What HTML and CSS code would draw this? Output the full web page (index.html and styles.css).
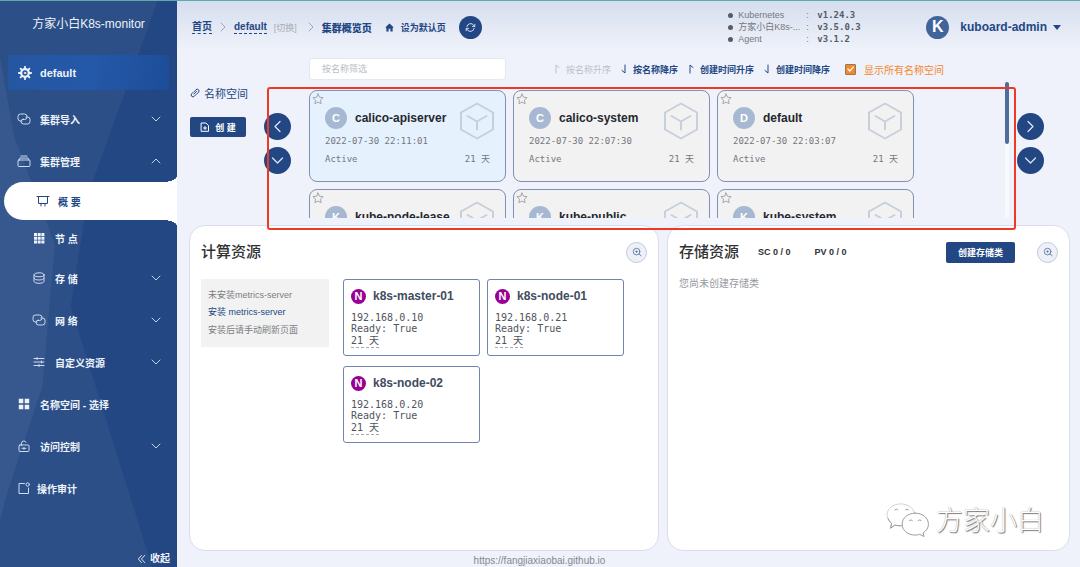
FILE: index.html
```
<!DOCTYPE html>
<html lang="zh-CN">
<head>
<meta charset="utf-8">
<title>方家小白K8s-monitor</title>
<link rel="stylesheet" href="styles.css">
</head>
<body>
<svg class="defs" aria-hidden="true">
  <symbol id="chev" viewBox="0 0 12 12"><path d="M2 4l4 4 4-4"/></symbol>
  <symbol id="star" viewBox="0 0 12 12"><path d="M6 1l1.500 3.200 3.500.5-2.500 2.500.6 3.500L6 9.100 2.900 10.700l.6-3.500L1 4.700l3.500-.5z"/></symbol>
  <symbol id="cube" viewBox="0 0 36 38"><path d="M18 1.500L34 10.500V27.500L18 36.500 2 27.500V10.500zM18 27.500V19.500M8.500 14L18 19.500 27.500 14"/></symbol>
  <symbol id="links" viewBox="0 0 14 12"><path d="M5 8H3.500A2.500 2.500 0 0 1 1 5.500v-2A2.500 2.500 0 0 1 3.500 1h4A2.500 2.500 0 0 1 10 3.500v.8A2.500 2.500 0 0 1 7.500 6.500H6M9 4h1.500A2.500 2.500 0 0 1 13 6.500v2a2.500 2.500 0 0 1-2.500 2.500h-4A2.500 2.500 0 0 1 4 8.500v-.3A2.500 2.500 0 0 1 6.500 6"/></symbol>
  <symbol id="magnify" viewBox="0 0 12 12"><circle cx="5.500" cy="5.500" r="4"/><path d="M8.500 8.500L11 10.500M4.500 5.500h2M5.500 4.500v2"/></symbol>
  <symbol id="up" viewBox="0 0 8 10"><path d="M3 9V1l3 2.500"/></symbol>
  <symbol id="down" viewBox="0 0 8 10"><path d="M5 1v8L2 6.500"/></symbol>
</svg>

<aside class="sidebar">
  <h1 class="brand">方家小白K8s-monitor</h1>
  <a class="cluster" href="#">
    <svg class="ico" viewBox="0 0 14 14"><circle cx="7" cy="7" r="3.800" stroke-width="2.200"/><circle cx="7" cy="7" r=".8"/><path d="M7 .8v2M7 11.200v2M.8 7h2M11.200 7h2M2.600 2.600l1.400 1.400M10 10l1.400 1.400M11.400 2.600L10 4M4 10l-1.400 1.400" stroke-width="1.800"/></svg>
    <span>default</span>
  </a>
  <nav class="menu">
    <a class="item" href="#"><svg class="ico"><use href="#links"/></svg><span>集群导入</span><svg class="chev"><use href="#chev"/></svg></a>
    <a class="item" href="#"><svg class="ico" viewBox="0 0 14 12"><rect x="1" y="5" width="12" height="6.500" rx="1"/><path d="M2 5l1-2h8l1 2M4 1h6"/></svg><span>集群管理</span><svg class="chev flip"><use href="#chev"/></svg></a>
    <a class="item sub active" href="#"><svg class="ico" viewBox="0 0 14 12"><path d="M1 1.500h12M2.500 1.500v7h9v-7M5 8.500v2.500M9 8.500v2.500"/></svg><span>概 要</span></a>
    <a class="item sub first" href="#"><svg class="ico solid" viewBox="0 0 12 12"><path d="M1 1h3v3H1zM4.700 1h3v3h-3zM8.400 1h3v3h-3zM1 4.700h3v3H1zM4.700 4.700h3v3h-3zM8.400 4.700h3v3h-3zM1 8.400h3v3H1zM4.700 8.400h3v3h-3zM8.400 8.400h3v3h-3z"/></svg><span>节 点</span></a>
    <a class="item sub" href="#"><svg class="ico" viewBox="0 0 12 12"><ellipse cx="6" cy="2.800" rx="5" ry="2"/><path d="M1 2.800v6.500c0 1.200 2.200 2 5 2s5-.8 5-2V2.800M1 6c0 1.200 2.200 2 5 2s5-.8 5-2"/></svg><span>存 储</span><svg class="chev"><use href="#chev"/></svg></a>
    <a class="item sub" href="#"><svg class="ico"><use href="#links"/></svg><span>网 络</span><svg class="chev"><use href="#chev"/></svg></a>
    <a class="item sub" href="#"><svg class="ico" viewBox="0 0 12 12"><path d="M1 2.500h10M1 6h10M1 9.500h10M4 1.500v2M8.500 5v2M6 8.500v2"/></svg><span>自定义资源</span><svg class="chev"><use href="#chev"/></svg></a>
    <a class="item" href="#"><svg class="ico solid" viewBox="0 0 12 12"><path d="M.8.8h4.500v4.500H.8zM6.700.8h4.500v4.500H6.700zM.8 6.700h4.500v4.500H.8zM6.700 6.700h4.500v4.500H6.700z"/></svg><span>名称空间 - 选择</span></a>
    <a class="item" href="#"><svg class="ico" viewBox="0 0 12 12"><rect x="1" y="5" width="10" height="6.500" rx="1"/><path d="M3.500 5V3.300a2.400 2.400 0 0 1 4.600-.9M4 8.300h4M6 7.500v2"/></svg><span>访问控制</span><svg class="chev"><use href="#chev"/></svg></a>
    <a class="item tight" href="#"><svg class="ico" viewBox="0 0 12 12"><path d="M6.500 1.500H1v10h9.500V6"/><circle cx="9.700" cy="2.500" r="1.700"/></svg><span>操作审计</span></a>
  </nav>
  <button class="collapse" type="button"><svg viewBox="0 0 10 10"><path d="M5 1L1.500 5 5 9M8.500 1L5 5l3.500 4"/></svg>收起</button>
</aside>

<main class="main">
  <header class="header">
    <nav class="crumbs">
      <a class="dotted" href="#">首页</a>
      <svg class="sep"><use href="#chev"/></svg>
      <a class="dotted" href="#">default</a>
      <a class="switch" href="#">[切换]</a>
      <svg class="sep"><use href="#chev"/></svg>
      <b>集群概览页</b>
      <a class="home" href="#"><svg viewBox="0 0 10 10"><path d="M5 .5L.5 4.800 1.500 5.500V9.500H4V6.500H6V9.500H8.500V5.500L9.500 4.800z"/></svg>设为默认页</a>
      <button class="refresh" type="button" aria-label="刷新"><svg viewBox="0 0 12 12"><path d="M2 5a4.200 4.200 0 0 1 7.500-1.500L10.500 5M10.700 2.500V5H8.200M10 7a4.200 4.200 0 0 1-7.500 1.500L1.500 7M1.300 9.500V7h2.500"/></svg></button>
    </nav>
    <ul class="versions">
      <li><span>Kubernetes</span><i>:</i><b>v1.24.3</b></li>
      <li><span>方家小白K8s-...</span><i>:</i><b>v3.5.0.3</b></li>
      <li><span>Agent</span><i>:</i><b>v3.1.2</b></li>
    </ul>
    <button class="user" type="button"><span class="avatar">K</span>kuboard-admin<span class="caret"></span></button>
  </header>

  <section class="ns">
    <div class="ns-side">
      <h2><svg viewBox="0 0 10 10"><path d="M4 6L6.500 3.500M3.500 4L1.700 5.800a1.700 1.700 0 0 0 2.500 2.500L6 6.500M4.500 3.500L6 1.700a1.700 1.700 0 0 1 2.500 2.500L6.800 6"/></svg>名称空间</h2>
      <button class="primary create" type="button"><svg viewBox="0 0 10 10"><path d="M1.500 1h4.500l2.500 2.500V9.300h-7zM3.500 6h3M5 4.500v3"/></svg>创 建</button>
    </div>
    <div class="arrows">
      <button type="button" aria-label="向左"><svg class="left"><use href="#chev"/></svg></button>
      <button type="button" aria-label="展开左侧"><svg><use href="#chev"/></svg></button>
    </div>
    <div class="ns-body">
      <div class="tools">
        <input class="filter" type="text" placeholder="按名称筛选" aria-label="按名称筛选">
        <div class="sorts">
          <button type="button" disabled><svg><use href="#up"/></svg>按名称升序</button>
          <button type="button"><svg><use href="#down"/></svg>按名称降序</button>
          <button type="button"><svg><use href="#up"/></svg>创建时间升序</button>
          <button type="button"><svg><use href="#down"/></svg>创建时间降序</button>
        </div>
        <label class="all"><input type="checkbox" checked>显示所有名称空间</label>
      </div>
      <div class="scroller">
        <div class="cards">
          <article class="card selected"><svg class="star"><use href="#star"/></svg><header><span class="letter">C</span><h3>calico-apiserver</h3></header><svg class="cube"><use href="#cube"/></svg><time>2022-07-30 22:11:01</time><p><span>Active</span><span>21 天</span></p></article>
          <article class="card"><svg class="star"><use href="#star"/></svg><header><span class="letter">C</span><h3>calico-system</h3></header><svg class="cube"><use href="#cube"/></svg><time>2022-07-30 22:07:30</time><p><span>Active</span><span>21 天</span></p></article>
          <article class="card"><svg class="star"><use href="#star"/></svg><header><span class="letter">D</span><h3>default</h3></header><svg class="cube"><use href="#cube"/></svg><time>2022-07-30 22:03:07</time><p><span>Active</span><span>21 天</span></p></article>
          <article class="card"><svg class="star"><use href="#star"/></svg><header><span class="letter">K</span><h3>kube-node-lease</h3></header><svg class="cube"><use href="#cube"/></svg></article>
          <article class="card"><svg class="star"><use href="#star"/></svg><header><span class="letter">K</span><h3>kube-public</h3></header><svg class="cube"><use href="#cube"/></svg></article>
          <article class="card"><svg class="star"><use href="#star"/></svg><header><span class="letter">K</span><h3>kube-system</h3></header><svg class="cube"><use href="#cube"/></svg></article>
        </div>
        <div class="track"><div class="thumb"></div></div>
      </div>
    </div>
    <div class="arrows">
      <button type="button" aria-label="向右"><svg class="right"><use href="#chev"/></svg></button>
      <button type="button" aria-label="展开右侧"><svg><use href="#chev"/></svg></button>
    </div>
    <div class="highlight"></div>
  </section>

  <div class="panels">
    <section class="panel compute">
      <header class="panel-head"><h2>计算资源</h2><button class="round" type="button" aria-label="查看计算资源"><svg><use href="#magnify"/></svg></button></header>
      <div class="compute-body">
        <div class="notice"><span>未安装metrics-server</span><a href="#">安装 metrics-server</a><span>安装后请手动刷新页面</span></div>
        <div class="nodes">
          <article class="node"><h3><span>N</span>k8s-master-01</h3><p>192.168.0.10</p><p>Ready: True</p><p><u>21 天</u></p></article>
          <article class="node"><h3><span>N</span>k8s-node-01</h3><p>192.168.0.21</p><p>Ready: True</p><p><u>21 天</u></p></article>
          <article class="node"><h3><span>N</span>k8s-node-02</h3><p>192.168.0.20</p><p>Ready: True</p><p><u>21 天</u></p></article>
        </div>
      </div>
    </section>
    <section class="panel storage">
      <header class="panel-head"><h2>存储资源</h2><b>SC 0 / 0</b><b>PV 0 / 0</b><button class="primary add" type="button">创建存储类</button><button class="round" type="button" aria-label="查看存储资源"><svg><use href="#magnify"/></svg></button></header>
      <p class="empty">您尚未创建存储类</p>
      <div class="watermark"><svg viewBox="0 0 46 38"><path d="M15 25.500c-2 0-3.500-.3-5-.8L5.500 28l1.200-5C3.500 20.500 2 17.500 2 14.500 2 8 8 3 16 3c7 0 12.500 3.500 14 9" stroke="#d0d0d0"/><path d="M3 18q1 3 3.700 5L5.500 28l4.500-3.300q2.500.8 7 .8"/><path d="M31 12.500c-8 0-13.500 5-13.500 11.200S23 35 31 35c1.500 0 3-.2 4.500-.7L40 36.500l-1-3.700c3.500-2.300 5.500-5.300 5.500-8.800C44.500 17.500 39 12.500 31 12.500z"/><path d="M10 9q1.500-1.500 3 0M21 9q1.500-1.500 3 0M25 20q1.500-1.500 3 0M34 20q1.500-1.500 3 0"/></svg>方家小白</div>
    </section>
  </div>
  <footer class="footer">https://fangjiaxiaobai.github.io</footer>
</main>
</body>
</html>
```

FILE: styles.css
```
* { box-sizing: border-box; }
body, h1, h2, h3, p, ul { margin: 0; padding: 0; }
body {
  display: flex;
  min-height: 100vh;
  border-top: 1px solid #5fa9a8;
  background: #eff2fa;
  color: #303133;
  font-family: "Liberation Sans", "Noto Sans CJK SC", sans-serif;
  font-size: 10px;
}
a { color: inherit; text-decoration: none; }
button { margin: 0; padding: 0; border: 0; background: none; color: inherit; font: inherit; }
svg { width: 12px; height: 12px; flex: none; fill: none; stroke: currentColor; stroke-linecap: round; stroke-linejoin: round; }
.defs { position: absolute; width: 0; height: 0; }

/* Sidebar */
.sidebar {
  position: relative;
  z-index: 0;
  flex: 0 0 177px;
  display: flex;
  flex-direction: column;
  background: #224783;
  color: #eef3fb;
}
.sidebar::before, .sidebar::after { content: ""; position: absolute; inset: 0; z-index: -1; }
.sidebar::before { background: #2b4f86; clip-path: polygon(0 0, 89% 0, 50% 34%, 40% 54%, 86% 100%, 0 100%); }
.sidebar::after { background: #36588f; clip-path: polygon(0 10%, 8% 24%, 31% 43%, 24% 68%, 3% 88%, 0 92%); }
.brand { padding-top: 13px; font-size: 12px; font-weight: 400; line-height: 20px; text-align: center; }
.cluster {
  display: flex;
  align-items: center;
  gap: 8px;
  height: 35px;
  margin: 21px 8px 8px;
  padding-left: 10px;
  background: linear-gradient(100deg, #2556a0, #2459a9 50%, #1d4d99);
  font-size: 11px;
  font-weight: 700;
}
.ico { width: 14px; height: 12px; }
.cluster .ico { width: 14px; height: 14px; }
.solid { fill: currentColor; stroke: none; }
.item {
  position: relative;
  display: flex;
  align-items: center;
  gap: 9px;
  height: 42px;
  padding: 0 15px 0 17px;
  font-weight: 700;
}
.item.tight { gap: 6px; }
.item.sub { padding-left: 32px; }
.item.first { height: 38px; }
.item .ico:not(.solid) { color: #cfdbef; }
.chev { margin-left: auto; color: #c5d3ea; }
.flip { transform: rotate(180deg); }
.item.active {
  height: 38px;
  margin-left: 4px;
  gap: 8px;
  border-radius: 19px 0 0 19px;
  background: #fff;
  color: #224783;
}
.item.active .ico { color: #224783; }
.item.active::before, .item.active::after { content: ""; position: absolute; right: 0; width: 14px; height: 6px; }
.item.active::before { bottom: 100%; background: radial-gradient(ellipse 14px 6px at 0 0, transparent 98%, #fff 100%); }
.item.active::after { top: 100%; background: radial-gradient(ellipse 14px 6px at 0 100%, transparent 98%, #fff 100%); }
.item.active + .item { margin-top: -1px; }
.collapse {
  display: flex;
  align-items: center;
  align-self: flex-end;
  gap: 4px;
  margin: auto 7px 0 0;
  font-weight: 700;
  line-height: 16px;
}
.collapse svg { width: 9px; height: 10px; }

/* Header */
.main { flex: 1; min-width: 0; display: flex; flex-direction: column; padding: 0 10px 0 12px; background: linear-gradient(#d5deee, #eff2fa 50px); }
.header { display: flex; align-items: center; height: 52px; padding: 0 9px 0 3px; color: #224783; }
.crumbs { display: flex; align-items: center; gap: 5px; font-weight: 700; }
.dotted { border-bottom: 1px dashed #224783; line-height: 12px; }
.sep { transform: rotate(-90deg); color: #9aa6bc; }
.switch { margin: 0 3px 0 2px; color: #a8acb4; font-size: 9px; font-weight: 400; }
.home { display: flex; align-items: center; gap: 7px; margin-left: 8px; font-size: 9px; }
.home svg { width: 9px; height: 9px; fill: currentColor; stroke: none; }
.refresh { display: grid; place-items: center; width: 23px; height: 23px; margin-left: 8px; border-radius: 50%; background: #224783; color: #dce6f6; }
.refresh svg { width: 11px; height: 11px; }
.versions { margin: 0 63px 0 auto; color: #75787e; font-size: 9px; line-height: 12px; list-style: none; }
.versions li { display: grid; grid-template-columns: 10px 68px 11px 46px; align-items: center; height: 12px; }
.versions li::before { content: ""; width: 5px; height: 5px; border-radius: 50%; background: #555b68; }
.versions span { white-space: nowrap; }
.versions i { font-style: normal; }
.versions b { color: #555b68; font-family: "DejaVu Sans Mono", monospace; }
.user { display: flex; align-items: center; gap: 11px; font-size: 12px; font-weight: 700; }
.avatar { display: grid; place-items: center; width: 23px; height: 23px; border-radius: 50%; background: #41649b; color: #fff; font-size: 16px; }
.caret { margin-left: -5px; border: 4px solid transparent; border-top: 5px solid currentColor; border-bottom: 0; }

/* Namespace selector */
.ns { position: relative; z-index: 1; display: grid; grid-template-columns: 75px 26px 1fr 26px; margin-top: 5px; padding-right: 27px; }
.ns-side { padding: 26px 0 0 1px; color: #224783; }
.ns-side h2 { display: flex; align-items: center; gap: 4px; height: 18px; font-size: 11px; font-weight: 400; }
.ns-side svg { width: 10px; height: 10px; }
.primary { display: flex; align-items: center; justify-content: center; border-radius: 2px; background: #224783; color: #fff; font-size: 9px; font-weight: 700; }
.create { gap: 5px; width: 56px; height: 20px; margin-top: 15px; }
.arrows { display: flex; flex-direction: column; gap: 7px; padding-top: 55px; }
.arrows button { display: grid; place-items: center; width: 27px; height: 27px; border-radius: 50%; background: #224783; color: #dce6f6; }
.arrows svg { width: 15px; height: 15px; }
.left { transform: rotate(90deg); }
.right { transform: rotate(-90deg); }
.ns-body { min-width: 0; padding: 0 8px 0 19px; }
.tools { display: flex; align-items: center; height: 22px; }
.filter { width: 197px; height: 22px; padding: 0 12px; border: 1px solid #e4e8f0; border-radius: 3px; background: #fff; font: inherit; font-size: 9px; }
.filter::placeholder { color: #b9bdc5; opacity: 1; }
.sorts { display: flex; gap: 9px; margin-left: 47px; color: #224783; font-size: 9px; font-weight: 700; white-space: nowrap; }
.sorts button { display: flex; align-items: center; gap: 5px; }
.sorts button:disabled { color: #bcc0c8; font-weight: 400; }
.sorts svg { width: 8px; height: 10px; }
.all { display: flex; align-items: center; gap: 8px; margin-left: 15px; color: #f5872d; white-space: nowrap; }
.all input { display: grid; place-items: center; appearance: none; width: 11px; height: 11px; margin: 0; border: 1px solid #94775a; border-radius: 1px; background: #f5872d; }
.all input::before { content: ""; width: 7px; height: 7px; background: #fff; clip-path: polygon(0 50%, 12% 38%, 40% 65%, 88% 10%, 100% 22%, 40% 92%); }
.scroller { display: flex; height: 136px; margin-top: 2px; overflow: hidden; }
.cards { flex: 1; display: grid; grid-template-columns: repeat(auto-fill, 197px); grid-auto-rows: 92px; gap: 7px; padding-top: 8px; }
.track { width: 4px; background: #f8f9fc; }
.thumb { height: 62px; border-radius: 2px; background: #506c99; }
.card { position: relative; padding: 16px 15px 0; border: 1px solid #7f90b1; border-radius: 8px; background: #f2f2f2; color: #74777d; font-family: "DejaVu Sans Mono", "Noto Sans CJK SC", monospace; font-size: 9px; }
.card.selected { background: #e5f1fd; }
.card header { display: flex; align-items: center; gap: 8px; height: 22px; }
.card h3 { color: #25282e; font-family: "Liberation Sans", sans-serif; font-size: 12px; }
.letter { display: grid; place-items: center; width: 22px; height: 22px; border-radius: 50%; background: #a7b9d2; color: #fff; font: 700 11px "Liberation Sans", sans-serif; }
.star { position: absolute; top: 2px; left: 2px; color: #a2a6ae; }
.cube { position: absolute; top: 11px; right: 10px; width: 36px; height: 38px; color: #c8cfdc; stroke-width: 2; }
.card time { display: block; margin-top: 6px; line-height: 13px; }
.card p { display: flex; justify-content: space-between; margin-top: 5px; line-height: 13px; }
.highlight { position: absolute; top: 29px; right: 54px; bottom: -12px; left: 78px; border: 2px solid #ee3a25; border-radius: 3px; pointer-events: none; }

/* Resource panels */
.panels { flex: 1; display: grid; grid-template-columns: 470fr 403fr; gap: 8px; margin-top: 7px; }
.panel { position: relative; padding: 14px 11px; border: 1px solid #d9deea; border-radius: 16px; background: #fff; }
.panel-head { display: flex; align-items: center; height: 24px; }
.panel-head h2 { font-size: 15px; font-weight: 500; line-height: 22px; }
.panel-head b { margin-left: 19px; font-size: 9px; }
.panel-head b + b { margin-left: 24px; }
.round { display: grid; place-items: center; width: 21px; height: 21px; margin-left: auto; border: 1px solid #bfcadd; border-radius: 50%; background: #edf1f7; color: #54719f; }
.round svg { width: 10px; height: 10px; }
.add { width: 69px; height: 21px; margin-left: auto; }
.add + .round { margin-left: 22px; }
.compute-body { display: flex; align-items: flex-start; gap: 14px; margin-top: 15px; }
.notice { display: flex; flex-direction: column; flex: 0 0 128px; height: 68px; padding: 7px; background: #f2f2f2; color: #7b7d82; font-size: 9px; line-height: 18px; }
.notice a { color: #224783; line-height: 17px; }
.nodes { display: grid; grid-template-columns: repeat(auto-fill, 137px); gap: 10px 7px; flex: 1; }
.node { height: 77px; padding: 7px; border: 1px solid #7085ad; border-radius: 3px; color: #50545d; font-family: "DejaVu Sans Mono", "Noto Sans CJK SC", monospace; line-height: 11px; }
.node h3 { display: flex; align-items: center; gap: 7px; height: 18px; margin-bottom: 7px; color: #414c60; font-family: "Liberation Sans", sans-serif; font-size: 12px; }
.node h3 span { display: grid; place-items: center; width: 15px; height: 15px; border-radius: 50%; background: #980094; color: #fff; font-size: 11px; }
.node u { display: inline-block; border-bottom: 1px dashed #a3a6ad; line-height: 13px; text-decoration: none; }
.empty { margin-top: 12px; color: #96999f; line-height: 16px; }
.watermark { position: absolute; right: 25px; bottom: 12px; display: flex; align-items: center; gap: 6px; color: #fff; font-family: "Noto Sans CJK SC", sans-serif; font-size: 27px; font-weight: 300; line-height: 38px; text-shadow: 1px 1px 1px #777, 0 0 1px #999; }
.watermark svg { width: 45px; height: 37px; color: #9a9a9a; }
.footer { height: 16px; padding: 4px 180px 0 0; color: #85888e; line-height: 12px; text-align: center; }
```
